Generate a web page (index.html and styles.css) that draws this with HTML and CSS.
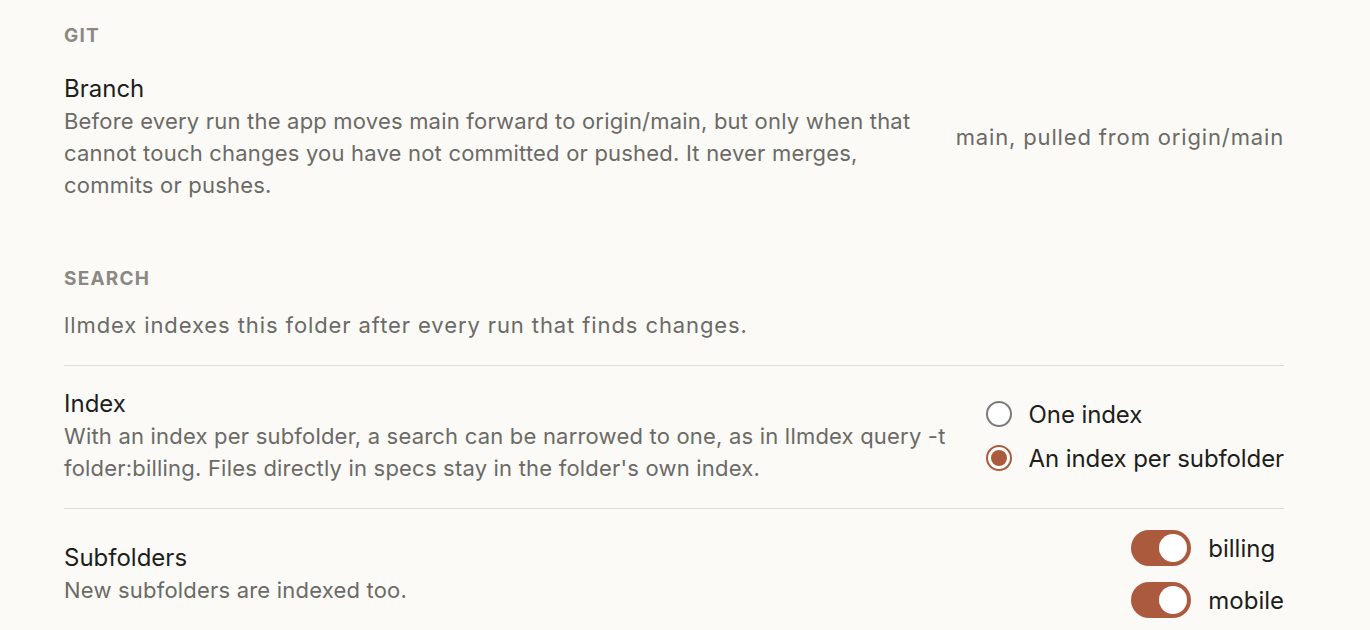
FILE: index.html
```html
<!DOCTYPE html>
<html lang="en">
<head>
<meta charset="utf-8">
<title>Settings</title>
<link rel="stylesheet" href="styles.css">
</head>
<body>
<main class="page">
  <section class="section section-git">
    <h2 class="section-label">GIT</h2>
    <div class="row">
      <div class="row-text">
        <div class="row-title">Branch</div>
        <p class="row-desc">Before every run the app moves main forward to origin/main, but only when that cannot touch changes you have not committed or pushed. It never merges, commits or pushes.</p>
      </div>
      <div class="row-value">main, pulled from origin/main</div>
    </div>
  </section>

  <section class="section section-search">
    <h2 class="section-label">SEARCH</h2>
    <p class="section-intro">llmdex indexes this folder after every run that finds changes.</p>
    <div class="row row-bordered">
      <div class="row-text">
        <div class="row-title">Index</div>
        <p class="row-desc">With an index per subfolder, a search can be narrowed to one, as in llmdex query -t folder:billing. Files directly in specs stay in the folder's own index.</p>
      </div>
      <div class="radios">
        <label class="radio"><span class="radio-dot"></span><span class="radio-label">One index</span></label>
        <label class="radio radio-checked"><span class="radio-dot"></span><span class="radio-label">An index per subfolder</span></label>
      </div>
    </div>
    <div class="row row-bordered row-last">
      <div class="row-text">
        <div class="row-title">Subfolders</div>
        <p class="row-desc">New subfolders are indexed too.</p>
      </div>
      <div class="toggles">
        <div class="toggle-item"><span class="toggle"><span class="knob"></span></span><span class="toggle-label">billing</span></div>
        <div class="toggle-item"><span class="toggle"><span class="knob"></span></span><span class="toggle-label">mobile</span></div>
      </div>
    </div>
  </section>
</main>
</body>
</html>
```

FILE: styles.css
```css
html, body {
  margin: 0;
  padding: 0;
  background: #fbfaf7;
}

body {
  font-family: Inter, "Noto Sans", "Liberation Sans", sans-serif;
  color: #1e1e1c;
  -webkit-font-smoothing: antialiased;
}

.page {
  padding: 24px 86px 0 64px;
}

.section-label {
  margin: 0;
  font-size: 19px;
  line-height: 24px;
  font-weight: 700;
  letter-spacing: 1.2px;
  color: #8a8984;
}

.section-git .section-label {
  margin-bottom: 3px;
}

.section-search {
  margin-top: 42px;
}

.section-intro {
  margin: 18px 0 0;
  padding-bottom: 24px;
  font-size: 22px;
  line-height: 32px;
  letter-spacing: 0.9px;
  color: #6b6a66;
}

.row {
  display: flex;
  align-items: center;
  justify-content: space-between;
  gap: 30px;
  padding: 22px 0 24px;
}

.row-bordered {
  border-top: 1.5px solid #dcdbd5;
}

.row-last {
  padding-top: 21px;
}

.row-text {
  flex: 1;
  min-width: 0;
}

.row-title {
  font-size: 24px;
  line-height: 32px;
}

.row-desc {
  margin: 0;
  font-size: 22px;
  line-height: 32px;
  letter-spacing: 0.2px;
  color: #6b6a66;
}

.row-value {
  font-size: 22px;
  letter-spacing: 0.85px;
  color: #6b6a66;
  white-space: nowrap;
}

.radios {
  display: flex;
  flex-direction: column;
  gap: 12px;
}

.radio {
  display: flex;
  align-items: center;
  gap: 17px;
  height: 32px;
}

.radio-dot {
  box-sizing: border-box;
  width: 26px;
  height: 26px;
  border-radius: 50%;
  border: 2px solid #7b7b7a;
  background: #fff;
  position: relative;
}

.radio-checked .radio-dot {
  border-color: #ab5a3d;
}

.radio-checked .radio-dot::after {
  content: "";
  position: absolute;
  left: 3px;
  top: 3px;
  width: 16px;
  height: 16px;
  border-radius: 50%;
  background: #ab5a3d;
}

.radio-label {
  font-size: 24px;
  letter-spacing: -0.1px;
  white-space: nowrap;
}

.toggles {
  display: flex;
  flex-direction: column;
  gap: 16px;
}

.toggle-item {
  display: flex;
  align-items: center;
  gap: 17px;
}

.toggle {
  box-sizing: border-box;
  width: 60px;
  height: 36px;
  border-radius: 18px;
  background: #ab5a3d;
  padding: 4px;
  display: flex;
  justify-content: flex-end;
}

.knob {
  width: 28px;
  height: 28px;
  border-radius: 50%;
  background: #fff;
}

.toggle-label {
  font-size: 24px;
}
```
